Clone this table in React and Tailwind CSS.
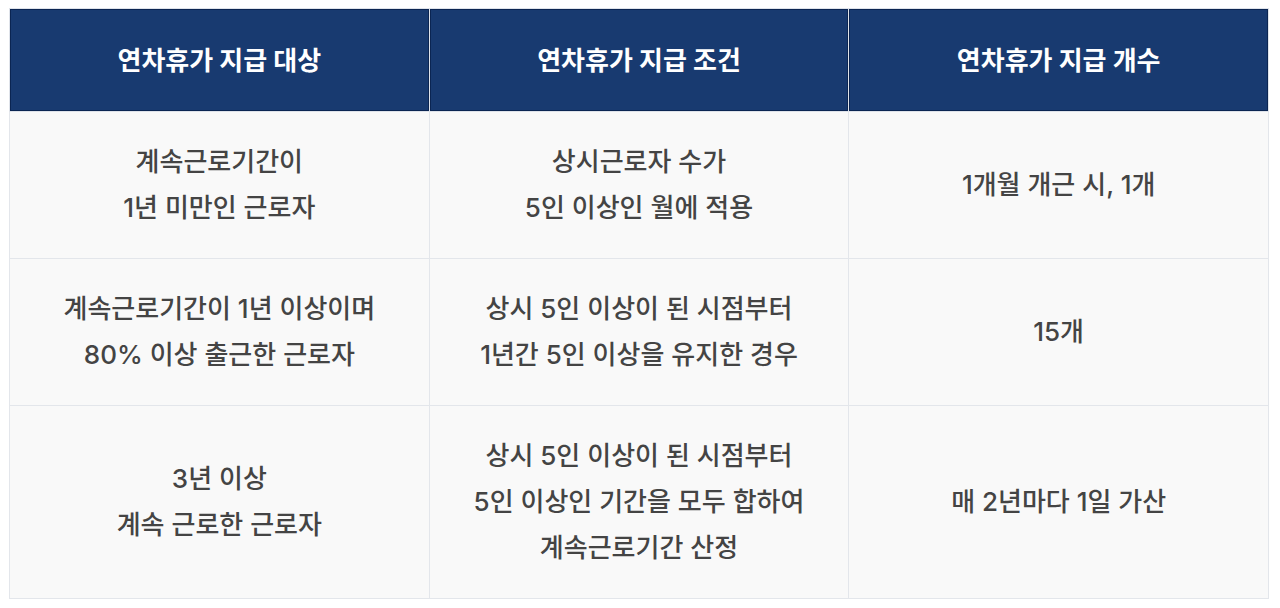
import React from "react";

const rows = [
  {
    target: ["계속근로기간이", "1년 미만인 근로자"],
    condition: ["상시근로자 수가", "5인 이상인 월에 적용"],
    count: ["1개월 개근 시, 1개"],
  },
  {
    target: ["계속근로기간이 1년 이상이며", "80% 이상 출근한 근로자"],
    condition: ["상시 5인 이상이 된 시점부터", "1년간 5인 이상을 유지한 경우"],
    count: ["15개"],
  },
  {
    target: ["3년 이상", "계속 근로한 근로자"],
    condition: [
      "상시 5인 이상이 된 시점부터",
      "5인 이상인 기간을 모두 합하여",
      "계속근로기간 산정",
    ],
    count: ["매 2년마다 1일 가산"],
  },
];

function Cell({ lines }) {
  return (
    <td className="border border-[#e3e6eb] bg-[#f9f9f9] py-[27px] px-4 text-center align-middle text-[26px] font-medium leading-[46px] text-[#444444]">
      {lines.map((line, i) => (
        <div key={i}>{line}</div>
      ))}
    </td>
  );
}

export default function App() {
  const heads = ["연차휴가 지급 대상", "연차휴가 지급 조건", "연차휴가 지급 개수"];

  return (
    <div
      className="bg-white w-[1280px] h-[608px] pl-[9px] pt-[8px]"
      style={{ fontFamily: 'Inter, "Noto Sans CJK KR", sans-serif' }}
    >
      <table className="w-[1260px] table-fixed border-collapse">
        <thead>
          <tr>
            {heads.map((h) => (
              <th
                key={h}
                className="h-[103px] border border-[#dfe3ea] bg-[#183a70] text-center align-middle text-[26px] font-bold text-white shadow-[inset_0_0_0_1px_#0b2552]"
              >
                {h}
              </th>
            ))}
          </tr>
        </thead>
        <tbody>
          {rows.map((r, i) => (
            <tr key={i}>
              <Cell lines={r.target} />
              <Cell lines={r.condition} />
              <Cell lines={r.count} />
            </tr>
          ))}
        </tbody>
      </table>
    </div>
  );
}
